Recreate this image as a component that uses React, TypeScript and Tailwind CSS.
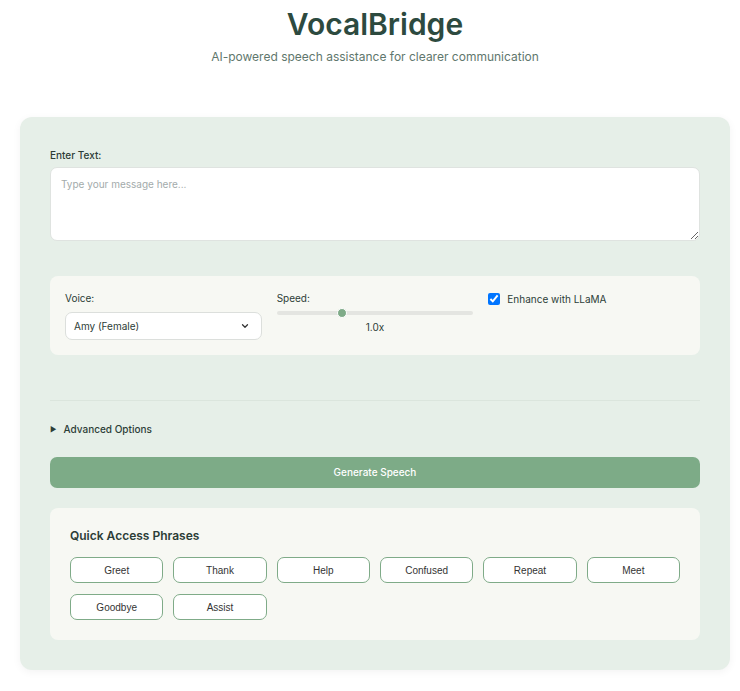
import { useState } from "react";

const phrases = ["Greet", "Thank", "Help", "Confused", "Repeat", "Meet", "Goodbye", "Assist"];

const App = () => {
    const [text, setText] = useState("");
    const [enhance, setEnhance] = useState(true);
    const speed = 1.0;
    const pct = ((speed - 0.5) / 1.5) * 100;

    return (
        <div className="min-h-screen bg-white font-['Inter',sans-serif] text-[#2c3d37] pb-[20px]">
            <header className="pt-[6px] pl-[10px] text-center">
                <h1 className="text-[30px] leading-[36px] font-semibold text-[#2d4a3f]">VocalBridge</h1>
                <p className="mt-[6px] text-[12px] leading-[18px] text-[#5f776d]">
                    AI-powered speech assistance for clearer communication
                </p>
            </header>

            <main className="ml-[20px] mt-[51px] w-[710px] rounded-[12px] bg-[#e6efe8] px-[30px] pt-[31px] pb-[30px] shadow-[0_2px_8px_rgba(0,0,0,0.05)]">
                <label className="block text-[10px] leading-[14px] font-medium mb-[5px]">Enter Text:</label>
                <textarea
                    value={text}
                    onChange={(e) => setText(e.target.value)}
                    placeholder="Type your message here..."
                    className="block w-full h-[74px] rounded-[7px] border border-[#dfe3e0] bg-white px-[10px] py-[9px] text-[10px] leading-[14px] placeholder:text-[#a3abab] focus:outline-none"
                />

                <div className="mt-[35px] rounded-[8px] bg-[#f7f8f3] p-[15px] grid grid-cols-3 gap-[15px]">
                    <div>
                        <label className="block text-[10px] leading-[14px] mb-[7px]">Voice:</label>
                        <div className="flex h-[28px] items-center justify-between rounded-[7px] border border-[#dcdfdc] bg-white pl-[8px] pr-[11px] text-[10px]">
                            <span>Amy (Female)</span>
                            <svg width="10" height="10" viewBox="0 0 24 24" fill="none" stroke="#333" strokeWidth="3" strokeLinecap="round" strokeLinejoin="round">
                                <path d="M6 9l6 6 6-6" />
                            </svg>
                        </div>
                    </div>
                    <div>
                        <label className="block text-[10px] leading-[14px]">Speed:</label>
                        <div className="relative mt-[3px] h-[10px] flex items-center">
                            <div className="h-[4px] w-full rounded-full bg-[#e4e5e1]" />
                            <div
                                className="absolute top-0 h-[10px] w-[10px] -ml-[5px] rounded-full bg-[#7fab88] border border-white"
                                style={{ left: `${pct}%` }}
                            />
                        </div>
                        <div className="mt-[2px] text-center text-[10px] leading-[14px]">{speed.toFixed(1)}x</div>
                    </div>
                    <div>
                        <label className="flex items-center gap-[7px] text-[10px] leading-[14px] pt-[1px]">
                            <input
                                type="checkbox"
                                checked={enhance}
                                onChange={(e) => setEnhance(e.target.checked)}
                                className="m-0 h-[12px] w-[12px]"
                            />
                            Enhance with LLaMA
                        </label>
                    </div>
                </div>

                <div className="mt-[45px] border-t border-[#dbe5dd] pt-[21px]">
                    <div className="flex items-center gap-[7px] text-[10px] leading-[14px] font-medium">
                        <span className="text-[7px] leading-none">▶</span>
                        Advanced Options
                    </div>
                </div>

                <button className="mt-[21px] block w-full h-[31px] rounded-[7px] bg-[#7dab87] text-[10px] text-white font-medium">
                    Generate Speech
                </button>

                <div className="mt-[20px] rounded-[8px] bg-[#f7f8f3] p-[20px]">
                    <h2 className="text-[12px] leading-[16px] font-semibold mb-[13px]">Quick Access Phrases</h2>
                    <div className="grid grid-cols-6 gap-x-[10px] gap-y-[11px]">
                        {phrases.map((p) => (
                            <button
                                key={p}
                                className="h-[26px] rounded-[7px] border border-[#7fab88] bg-white font-['Liberation_Sans',Arial,sans-serif] text-[10px] text-[#333]"
                            >
                                {p}
                            </button>
                        ))}
                    </div>
                </div>
            </main>
        </div>
    );
};

export default App;
